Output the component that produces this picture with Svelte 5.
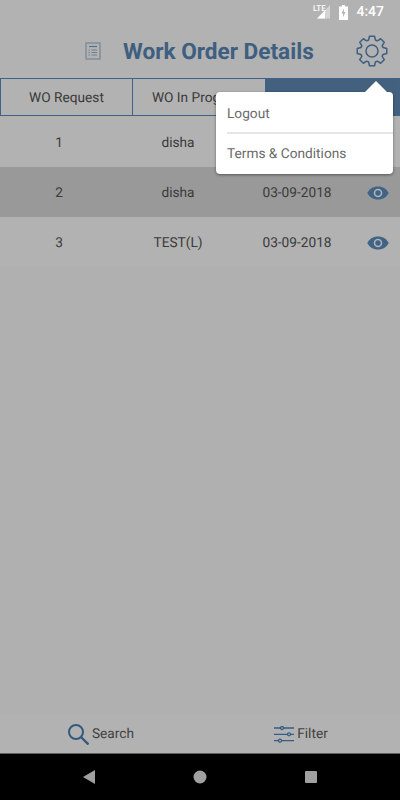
<script>
  // rows of the work order list (the first date sits behind the open menu)
  const orders = [
    { id: 1, name: 'disha', date: '' },
    { id: 2, name: 'disha', date: '03-09-2018', selected: true },
    { id: 3, name: 'TEST(L)', date: '03-09-2018' }
  ];
  const tabs = [
    { label: 'WO Request' },
    { label: 'WO In Progress' },
    { label: '', active: true }
  ];

  // settings gear: 8 teeth around the centre
  function gearPath(c, outer, root) {
    let d = '';
    for (let i = 0; i < 8; i++) {
      const a = (i * 45 - 90) * Math.PI / 180;
      const pts = [[root, -.3], [outer, -.17], [outer, .17], [root, .3]];
      for (const [r, off] of pts) {
        const x = (c + r * Math.cos(a + off)).toFixed(2);
        const y = (c + r * Math.sin(a + off)).toFixed(2);
        d += (d ? 'L' : 'M') + x + ' ' + y;
      }
    }
    return d + 'z';
  }
</script>

<div class="screen">
  <div class="status">
    <svg class="signal" width="18" height="16" viewBox="0 0 18 16">
      <path d="M17 1v13.500H4z" fill="#d4d4d4" />
      <path d="M12 6.500v8H4z" fill="#fff" />
      <text x="0" y="7" class="lte">LTE</text>
    </svg>
    <svg class="battery" width="9" height="15" viewBox="0 0 9 15">
      <path d="M3 0h3v1.500h3V15H0V1.500h3z" fill="#fff" />
      <path d="M5 3.500L2.500 8.500H4.200L3.800 12.500L6.500 7H4.800z" fill="#b2b2b2" />
    </svg>
    <span class="time">4:47</span>
  </div>

  <header>
    <svg class="doc" width="16" height="18" viewBox="0 0 16 18" fill="none" stroke="#b5c8dc">
      <rect x="1" y="1" width="14" height="16" stroke-width="1.400" />
      <path d="M4 4.500h8" stroke="#7fa3c8" stroke-width="1.200" />
      <path d="M6.500 8h5.500M6.500 10.500h5.500M6.500 13h5.500M3.500 8h1.500M3.500 10.500h1.500M3.500 13h1.500" stroke="#9db9d6" stroke-width="1" />
    </svg>
    <h1>Work Order Details</h1>
    <svg class="gear" width="32" height="32" viewBox="0 0 32 32" fill="none" stroke="#5a89b7" stroke-width="1.500" stroke-linejoin="round">
      <circle cx="16" cy="16" r="6" />
      <path d={gearPath(16, 15, 11.5)} />
    </svg>
  </header>

  <nav class="tabs">
    {#each tabs as tab}
      <div class="tab" class:active={tab.active}>{tab.label}</div>
    {/each}
  </nav>

  <main>
    {#each orders as order}
      <div class="row" class:selected={order.selected}>
        <span>{order.id}</span>
        <span>{order.name}</span>
        <span>{order.date}</span>
        <svg class="eye" width="22" height="14" viewBox="0 0 22 14">
          <path d="M11 .5C6 .5 2 3.200 .3 7 2 10.800 6 13.500 11 13.500S20 10.800 21.700 7C20 3.200 16 .5 11 .5z" fill="#5d8fc0" />
          <circle cx="11" cy="7" r="4.300" fill="#fff" />
          <circle cx="11" cy="7" r="2.700" fill="#5d8fc0" />
        </svg>
      </div>
    {/each}
  </main>

  <footer>
    <div class="action">
      <svg width="21" height="21" viewBox="0 0 21 21" fill="none" stroke="#4f80b0">
        <circle cx="8" cy="8" r="7" stroke-width="2" />
        <path d="M13 13L20.500 20.500" stroke-width="2.400" />
      </svg>
      <span>Search</span>
    </div>
    <div class="action">
      <svg width="20" height="17" viewBox="0 0 20 17" fill="none" stroke="#4a86bd" stroke-width="1.300">
        <path d="M0 2h6.500M9.500 2H20M0 8.300h13.500M16.500 8.300H20M0 14.700h4.500M7.500 14.700H20" />
        <circle cx="8" cy="2" r="1.500" />
        <circle cx="15" cy="8.300" r="1.500" />
        <circle cx="6" cy="14.700" r="1.500" />
      </svg>
      <span>Filter</span>
    </div>
  </footer>

  <div class="android">
    <svg width="12" height="14" viewBox="0 0 12 14"><path d="M12 0v14L0 7z" fill="#a0a0a0" /></svg>
    <svg width="14" height="14" viewBox="0 0 14 14"><circle cx="7" cy="7" r="6.500" fill="#a0a0a0" /></svg>
    <svg width="12" height="12" viewBox="0 0 12 12"><rect width="12" height="12" rx="1" fill="#a0a0a0" /></svg>
  </div>

  <div class="scrim"></div>

  <div class="menu">
    <div class="item">Logout</div>
    <div class="item">Terms &amp; Conditions</div>
  </div>
</div>

<style>
  :global(body) {
    margin: 0;
    background: #fff;
  }

  .screen {
    position: relative;
    display: flex;
    flex-direction: column;
    width: 400px;
    height: 800px;
    overflow: hidden;
    background: #fff;
    font-family: Roboto, sans-serif;
    color: #555;
    text-rendering: geometricPrecision;
  }

  .status {
    position: relative;
    z-index: 3;
    display: flex;
    align-items: center;
    justify-content: flex-end;
    height: 24px;
    padding-right: 16px;
    box-sizing: border-box;
    background: #b2b2b2;
  }
  .lte { font-size: 8px; font-weight: 500; fill: #fff; font-family: Roboto, sans-serif; }
  .signal { margin-right: 8px; }
  .battery { margin-right: 8px; }
  .time { font-size: 14px; font-weight: 500; color: #fff; }

  header {
    display: flex;
    align-items: center;
    height: 54px;
    padding: 0 12px 0 85px;
    box-sizing: border-box;
  }
  .doc { flex: none; }
  h1 {
    margin: 0 0 0 22px;
    font-size: 22.6px;
    font-weight: 700;
    color: #5a89b7;
    white-space: nowrap;
  }
  .gear { flex: none; margin-left: auto; }

  .tabs {
    display: grid;
    grid-template-columns: 133px 133px 134px;
    height: 38px;
  }
  .tab {
    display: flex;
    align-items: center;
    justify-content: center;
    box-sizing: border-box;
    padding-top: 1px;
    border: 1px solid #5c8dbd;
    border-left-width: 0;
    font-size: 13.7px;
  }
  .tab:first-child { border-left-width: 1px; }
  .tab.active { background: #618cb5; }

  main {
    flex: 1;
    padding-top: 1px;
    background: #fcfcfc;
  }
  .row {
    display: grid;
    grid-template-columns: 118px 120px 118px 44px;
    align-items: center;
    justify-items: center;
    box-sizing: border-box;
    height: 50px;
    padding-top: 2px;
    font-size: 13.7px;
    background: #fff;
  }
  .row.selected { background: #dcdcdc; }

  footer {
    display: grid;
    grid-template-columns: 200px 200px;
    height: 40px;
    padding: 1px 0 0 1px;
    box-sizing: border-box;
    background: #fff;
    border-bottom: 1px solid #8a8a8a;
  }
  .action {
    display: flex;
    align-items: center;
    justify-content: center;
    gap: 3px;
    font-size: 13.7px;
    color: #5e5e5e;
  }

  .android {
    position: relative;
    z-index: 3;
    display: flex;
    align-items: center;
    height: 46px;
    background: #000;
    padding-left: 83px;
    gap: 98px;
  }

  .scrim {
    position: absolute;
    inset: 0;
    z-index: 1;
    background: rgba(0, 0, 0, .3);
  }

  .menu {
    position: absolute;
    z-index: 2;
    top: 92px;
    left: 216px;
    width: 177px;
    padding-left: 11px;
    box-sizing: border-box;
    background: #fff;
    border-radius: 4px;
    box-shadow: 0 1px 3px rgba(0, 0, 0, .45);
  }
  .menu::before {
    content: '';
    position: absolute;
    top: -11px;
    right: 6px;
    width: 22px;
    height: 11px;
    background: #fff;
    clip-path: polygon(50% 0, 100% 100%, 0 100%);
  }
  .item {
    display: flex;
    align-items: center;
    box-sizing: border-box;
    height: 40px;
    font-size: 13.7px;
    color: #6a6a6a;
  }
  .item:first-child {
    height: 42px;
    padding: 4px 0 0;
    border-bottom: 2px solid #e6e6e6;
  }
</style>
